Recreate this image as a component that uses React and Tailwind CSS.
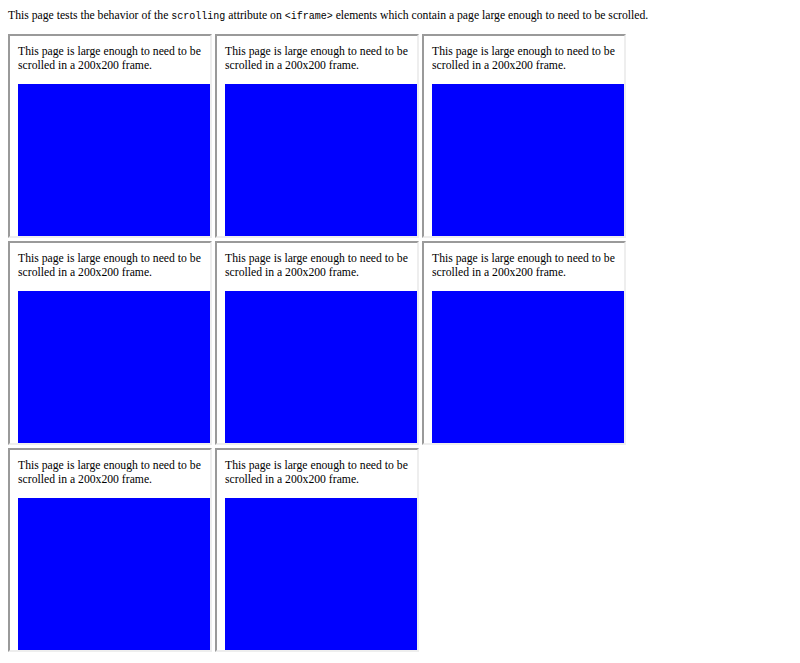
export default function App() {
  const frames = Array.from({ length: 8 })

  return (
    <div className="bg-white min-h-[663px] px-2 pt-[9px] pb-2 text-black text-[11.7px] leading-[14px] font-['Liberation_Serif',serif]">
      <p className="mb-[11px]">
        This page tests the behavior of the{' '}
        <code className="font-['Liberation_Mono',monospace] text-[10px] leading-none">scrolling</code>{' '}
        attribute on{' '}
        <code className="font-['Liberation_Mono',monospace] text-[10px] leading-none">&lt;iframe&gt;</code>{' '}
        elements which contain a page large enough to need to be scrolled.
      </p>

      <div className="flex flex-wrap gap-[3px] w-[620px]">
        {frames.map((_, i) => (
          <div
            key={i}
            className="w-[204px] h-[204px] border-2 border-t-[#9a9a9a] border-l-[#9a9a9a] border-b-[#eeeeee] border-r-[#eeeeee] overflow-hidden"
          >
            <div className="px-2 pt-[9px]">
              <div>This page is large enough to need to be scrolled in a 200x200 frame.</div>
              <div className="mt-[11px] w-[300px] h-[300px] bg-[#0000ff]" />
            </div>
          </div>
        ))}
      </div>
    </div>
  )
}
